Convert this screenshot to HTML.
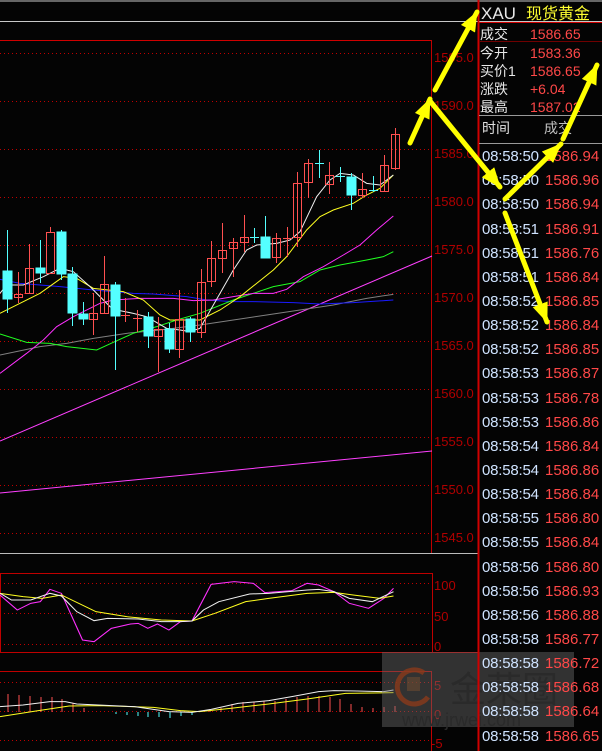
<!DOCTYPE html>
<html><head><meta charset="utf-8"><style>
html,body{margin:0;padding:0;background:#040404;}
body{width:602px;height:751px;overflow:hidden;position:relative;font-family:"Liberation Sans","Noto Sans CJK SC",sans-serif;}
svg{position:absolute;left:0;top:0;}
.ax{font-size:13px;fill:#b00000;}
.rt{font-size:15px;fill:#cfe3ff;letter-spacing:-0.2px;}
.rp{font-size:15px;fill:#ff4848;}
.lb{font-size:14px;fill:#e8e8e8;}
</style></head><body>
<svg width="602" height="751" viewBox="0 0 602 751">
<defs>
<marker id="ah" markerUnits="userSpaceOnUse" markerWidth="20" markerHeight="16" refX="19" refY="8" orient="auto"><path d="M0,0 L20,8 L0,16 Z" fill="#ffff00"/></marker>
</defs>
<rect width="602" height="751" fill="#040404"/>
<line x1="0" y1="1" x2="602" y2="1" stroke="#666" stroke-width="2"/>
<line x1="0" y1="21.5" x2="602" y2="21.5" stroke="#c8c8c8"/>
<line x1="0" y1="40.5" x2="432" y2="40.5" stroke="#d00000"/>
<g stroke="#c00000" stroke-dasharray="1,3">
<line x1="0" y1="53.5" x2="432" y2="53.5"/><line x1="0" y1="101.5" x2="432" y2="101.5"/>
<line x1="0" y1="149.5" x2="432" y2="149.5"/><line x1="0" y1="197.5" x2="432" y2="197.5"/>
<line x1="0" y1="245.5" x2="432" y2="245.5"/><line x1="0" y1="293.5" x2="432" y2="293.5"/>
<line x1="0" y1="341.5" x2="432" y2="341.5"/><line x1="0" y1="389.5" x2="432" y2="389.5"/>
<line x1="0" y1="437.5" x2="432" y2="437.5"/><line x1="0" y1="485.5" x2="432" y2="485.5"/>
<line x1="0" y1="533.5" x2="432" y2="533.5"/>
</g>
<line x1="431.5" y1="40" x2="431.5" y2="553" stroke="#c00000"/>
<g class="ax">
<text x="434" y="62">1595.0</text><text x="434" y="110">1590.0</text><text x="434" y="158">1585.0</text>
<text x="434" y="206">1580.0</text><text x="434" y="254">1575.0</text><text x="434" y="302">1570.0</text>
<text x="434" y="350">1565.0</text><text x="434" y="398">1560.0</text><text x="434" y="446">1555.0</text>
<text x="434" y="494">1550.0</text><text x="434" y="542">1545.0</text>
</g>
<line x1="0" y1="553.5" x2="478" y2="553.5" stroke="#bbb"/>
<line x1="0" y1="441" x2="432" y2="256" stroke="#ff40ff"/>
<line x1="0" y1="493" x2="432" y2="451" stroke="#ff40ff"/>
<g transform="translate(0,130) scale(0.33333)" fill="none" stroke-width="3">
<polyline stroke="#808080" points="0,675 120,650 200,640 280,625 380,610 480,600 600,585 700,570 800,555 900,540 1000,525 1100,505 1180,493"/>
<polyline stroke="#1a1aff" points="0,448 60,460 180,470 280,480 400,490 460,492 560,500 620,510 700,515 760,515 880,518 960,522 1060,518 1180,510"/>
<polyline stroke="#20ff20" points="0,612 80,637 150,640 200,650 290,660 340,637 400,610 470,590 530,570 600,550 700,510 760,490 820,470 900,455 960,420 1020,405 1100,390 1150,380 1180,365"/>
<polyline stroke="#ff30ff" points="0,730 80,670 130,630 170,590 220,560 300,520 340,510 420,505 520,505 580,512 640,510 700,500 760,490 820,490 860,478 910,440 970,410 1030,375 1080,345 1130,300 1180,258"/>
<polyline stroke="#ffff20" points="0,550 60,520 120,490 190,440 230,445 280,475 370,485 430,510 480,555 510,570 600,570 660,540 720,500 770,460 820,420 860,380 890,340 920,300 960,260 1000,240 1060,220 1100,195 1140,175 1180,135"/>
<polyline stroke="#f0f0f0" points="0,490 20,465 70,465 130,440 180,415 220,425 270,470 330,530 350,540 400,550 440,560 500,595 540,600 570,605 600,595 640,525 700,420 740,360 770,345 830,340 870,330 900,305 950,200 990,150 1020,130 1060,135 1100,160 1140,165 1180,135"/>
</g>
<g stroke-width="1">
<g stroke="#54ffff" fill="#54ffff">
<line x1="7.5" y1="230" x2="7.5" y2="313"/><rect x="3" y="271" width="9" height="28"/>
<line x1="40.5" y1="240" x2="40.5" y2="283"/><rect x="36" y="268" width="9" height="5"/>
<line x1="61.5" y1="230" x2="61.5" y2="280"/><rect x="57" y="232" width="9" height="42"/>
<line x1="72.5" y1="267" x2="72.5" y2="326"/><rect x="68" y="274" width="9" height="39"/>
<line x1="83.5" y1="302" x2="83.5" y2="325"/><rect x="79" y="314" width="9" height="5"/>
<line x1="115.5" y1="282" x2="115.5" y2="370"/><rect x="111" y="285" width="9" height="31"/>
<line x1="148.5" y1="312" x2="148.5" y2="348"/><rect x="144" y="317" width="9" height="19"/>
<line x1="169.5" y1="323" x2="169.5" y2="353"/><rect x="165" y="329" width="9" height="20"/>
<line x1="190.5" y1="317" x2="190.5" y2="342"/><rect x="186" y="319" width="9" height="13"/>
<line x1="254.5" y1="228" x2="254.5" y2="243"/><line x1="250" y1="237.5" x2="259" y2="237.5"/>
<line x1="265.5" y1="216" x2="265.5" y2="258"/><rect x="261" y="237" width="9" height="21"/>
<line x1="319.5" y1="150" x2="319.5" y2="178"/><line x1="315" y1="163.5" x2="324" y2="163.5"/>
<line x1="340.5" y1="167" x2="340.5" y2="182"/><line x1="336" y1="176.5" x2="345" y2="176.5"/>
<line x1="351.5" y1="173" x2="351.5" y2="210"/><rect x="347" y="177" width="9" height="18"/>
<line x1="373.5" y1="176" x2="373.5" y2="192"/><line x1="369" y1="190.5" x2="378" y2="190.5"/>
</g>
<g stroke="#ff5050" fill="none">
<line x1="18.5" y1="272" x2="18.5" y2="303"/><rect x="14.5" y="294.5" width="8" height="3"/>
<line x1="29.5" y1="244" x2="29.5" y2="293"/><rect x="25.5" y="268.5" width="8" height="25"/>
<line x1="50.5" y1="227" x2="50.5" y2="232"/><rect x="46.5" y="232.5" width="8" height="41"/>
<line x1="93.5" y1="293" x2="93.5" y2="335"/><rect x="89.5" y="313.5" width="8" height="6"/>
<line x1="104.5" y1="256" x2="104.5" y2="313"/><rect x="100.5" y="284.5" width="8" height="29"/>
<line x1="125.5" y1="298" x2="125.5" y2="322"/><line x1="121" y1="315.5" x2="130" y2="315.5"/>
<line x1="137.5" y1="310" x2="137.5" y2="332"/><line x1="133" y1="318.5" x2="142" y2="318.5"/>
<line x1="158.5" y1="317" x2="158.5" y2="372"/><rect x="154.5" y="329.5" width="8" height="7"/>
<line x1="179.5" y1="290" x2="179.5" y2="358"/><rect x="175.5" y="319.5" width="8" height="30"/>
<line x1="201.5" y1="269" x2="201.5" y2="338"/><rect x="197.5" y="282.5" width="8" height="50"/>
<line x1="211.5" y1="241" x2="211.5" y2="287"/><rect x="207.5" y="258.5" width="8" height="23"/>
<line x1="222.5" y1="223" x2="222.5" y2="273"/><rect x="218.5" y="250.5" width="8" height="8"/>
<line x1="233.5" y1="238" x2="233.5" y2="277"/><rect x="229.5" y="242.5" width="8" height="6"/>
<line x1="244.5" y1="215" x2="244.5" y2="252"/><rect x="240.5" y="237.5" width="8" height="5"/>
<line x1="276.5" y1="233" x2="276.5" y2="263"/><rect x="272.5" y="238.5" width="8" height="19"/>
<line x1="287.5" y1="227" x2="287.5" y2="257"/><line x1="283" y1="238.5" x2="292" y2="238.5"/>
<line x1="297.5" y1="172" x2="297.5" y2="247"/><rect x="293.5" y="183.5" width="8" height="54"/>
<line x1="308.5" y1="159" x2="308.5" y2="198"/><rect x="304.5" y="163.5" width="8" height="19"/>
<line x1="329.5" y1="162" x2="329.5" y2="194"/><rect x="325.5" y="175.5" width="8" height="9"/>
<line x1="362.5" y1="173" x2="362.5" y2="198"/><rect x="358.5" y="189.5" width="8" height="6"/>
<line x1="384.5" y1="155" x2="384.5" y2="192"/><rect x="380.5" y="165.5" width="8" height="26"/>
<line x1="395.5" y1="128" x2="395.5" y2="170"/><rect x="391.5" y="134.5" width="8" height="34"/>
</g>
</g>
<rect x="0.5" y="573.5" width="432" height="79" fill="none" stroke="#c00000"/>
<line x1="0" y1="652.5" x2="478" y2="652.5" stroke="#c00000"/>
<g stroke="#c00000" stroke-dasharray="1,3">
<line x1="0" y1="583.5" x2="432" y2="583.5"/><line x1="0" y1="613.5" x2="432" y2="613.5"/><line x1="0" y1="644.5" x2="432" y2="644.5"/>
</g>
<g class="ax"><text x="434" y="590">100</text><text x="434" y="621">50</text><text x="434" y="651">0</text></g>
<g transform="translate(0,550) scale(0.3839,0.33333)" fill="none" stroke-width="3">
<polyline stroke="#ff30ff" points="0,135 45,180 80,160 105,155 130,118 160,130 215,270 245,275 290,235 340,222 360,220 385,235 410,222 440,240 470,215 500,213 550,103 610,95 660,100 690,128 760,122 800,100 830,105 870,125 910,160 960,175 1000,145 1025,115"/>
<polyline stroke="#ffff20" points="0,130 60,140 110,145 160,135 250,185 330,200 420,210 500,213 560,190 640,155 700,145 800,130 870,127 920,135 990,145 1025,138"/>
<polyline stroke="#f0f0f0" points="0,130 30,150 80,150 130,130 160,138 200,185 245,212 280,205 360,207 420,215 470,215 500,213 530,180 570,155 650,132 700,130 800,120 830,118 870,125 910,145 970,155 1025,125"/>
</g>
<line x1="0" y1="671.5" x2="432" y2="671.5" stroke="#c00000"/>
<line x1="431.5" y1="671" x2="431.5" y2="751" stroke="#c00000"/>
<g stroke="#c00000" stroke-dasharray="1,3">
<line x1="0" y1="682.5" x2="432" y2="682.5"/><line x1="0" y1="711.5" x2="432" y2="711.5"/><line x1="0" y1="740.5" x2="432" y2="740.5"/>
</g>
<g class="ax"><text x="434" y="690">5</text><text x="434" y="719">0</text><text x="431" y="748">-5</text></g>
<g stroke="#ff5050">
<line x1="8" y1="694" x2="8" y2="712"/><line x1="19" y1="695" x2="19" y2="712"/><line x1="30" y1="696" x2="30" y2="712"/><line x1="41" y1="697" x2="41" y2="712"/><line x1="52" y1="697" x2="52" y2="712"/><line x1="62" y1="699" x2="62" y2="712"/><line x1="73" y1="703" x2="73" y2="712"/><line x1="84" y1="708" x2="84" y2="712"/>
<line x1="210" y1="709" x2="210" y2="712"/><line x1="221" y1="708" x2="221" y2="712"/><line x1="232" y1="704" x2="232" y2="712"/><line x1="243" y1="702" x2="243" y2="712"/><line x1="254" y1="702" x2="254" y2="712"/><line x1="264" y1="701" x2="264" y2="712"/><line x1="275" y1="701" x2="275" y2="712"/><line x1="286" y1="699" x2="286" y2="712"/><line x1="297" y1="697" x2="297" y2="712"/><line x1="308" y1="696" x2="308" y2="712"/><line x1="319" y1="696" x2="319" y2="712"/><line x1="330" y1="697" x2="330" y2="712"/><line x1="340" y1="699" x2="340" y2="712"/><line x1="351" y1="704" x2="351" y2="712"/><line x1="362" y1="707" x2="362" y2="712"/><line x1="373" y1="708" x2="373" y2="712"/><line x1="384" y1="707" x2="384" y2="712"/><line x1="395" y1="706" x2="395" y2="712"/>
</g>
<g stroke="#54ffff">
<line x1="116" y1="712" x2="116" y2="714"/><line x1="127" y1="712" x2="127" y2="715"/><line x1="138" y1="712" x2="138" y2="716"/><line x1="148" y1="712" x2="148" y2="717"/><line x1="159" y1="712" x2="159" y2="717"/><line x1="170" y1="712" x2="170" y2="718"/><line x1="181" y1="712" x2="181" y2="716"/><line x1="192" y1="712" x2="192" y2="715"/>
</g>
<g transform="translate(0,550) scale(0.3839,0.33333)" fill="none" stroke-width="3">
<polyline stroke="#ffff20" points="0,500 100,482 180,468 260,467 400,472 470,482 520,485 600,475 700,462 800,447 900,430 1025,428"/>
<polyline stroke="#f0f0f0" points="0,470 60,465 130,455 170,455 200,462 350,470 440,485 500,487 550,478 620,460 700,452 760,440 830,425 870,422 930,423 1000,425 1025,420"/>
</g>
<!-- watermark -->
<rect x="382" y="652" width="192" height="75" fill="#6a6a6a" fill-opacity="0.45"/>
<path d="M428,697 A17,17 0 1 1 424,673" fill="none" stroke="#8a3a1a" stroke-width="5" opacity="0.8"/>
<rect x="407" y="677" width="13" height="14" fill="#6a4a30" opacity="0.6"/>
<text x="450" y="702" font-size="36" fill="#2a2a2a" font-family="Noto Sans CJK SC, sans-serif">金荣圈</text>
<text x="402" y="726" font-size="18" fill="#2a2a2a">www.jrwei.com</text>
<!-- right panel -->
<line x1="478.5" y1="0" x2="478.5" y2="751" stroke="#d00000" stroke-width="2"/>
<line x1="479" y1="22.5" x2="602" y2="22.5" stroke="#d00000"/>
<line x1="479" y1="41.5" x2="602" y2="41.5" stroke="#700000"/>
<line x1="479" y1="115.5" x2="602" y2="115.5" stroke="#999"/>
<line x1="479" y1="143.5" x2="602" y2="143.5" stroke="#999"/>
<text x="481" y="19" font-size="17" fill="#e8e8e8">XAU</text>
<text x="526" y="19" font-size="16" fill="#ffff30" font-family="Noto Sans CJK SC, sans-serif">现货黄金</text>
<g class="lb"><text x="480" y="39">成交</text><text x="480" y="58">今开</text><text x="480" y="76">买价1</text><text x="480" y="94">涨跌</text><text x="480" y="112">最高</text></g>
<g class="rp" style="font-size:14px"><text x="530" y="39">1586.65</text><text x="530" y="58">1583.36</text><text x="530" y="76">1586.65</text><text x="530" y="94">+6.04</text><text x="530" y="112">1587.02</text></g>
<text x="482" y="133" font-size="14" fill="#e0e0e0">时间</text>
<text x="544" y="133" font-size="14" fill="#c0c0c0">成交</text>
<g class="rt">
<text x="482" y="161">08:58:50</text><text x="482" y="185">08:58:50</text><text x="482" y="209">08:58:50</text><text x="482" y="234">08:58:51</text><text x="482" y="258">08:58:51</text><text x="482" y="282">08:58:51</text><text x="482" y="306">08:58:52</text><text x="482" y="330">08:58:52</text><text x="482" y="354">08:58:52</text><text x="482" y="378">08:58:53</text><text x="482" y="403">08:58:53</text><text x="482" y="427">08:58:53</text><text x="482" y="451">08:58:54</text><text x="482" y="475">08:58:54</text><text x="482" y="499">08:58:54</text><text x="482" y="523">08:58:55</text><text x="482" y="547">08:58:55</text><text x="482" y="572">08:58:56</text><text x="482" y="596">08:58:56</text><text x="482" y="620">08:58:56</text><text x="482" y="644">08:58:58</text><text x="482" y="668">08:58:58</text><text x="482" y="692">08:58:58</text><text x="482" y="716">08:58:58</text><text x="482" y="741">08:58:58</text>
</g>
<g class="rp">
<text x="545" y="161">1586.94</text><text x="545" y="185">1586.96</text><text x="545" y="209">1586.94</text><text x="545" y="234">1586.91</text><text x="545" y="258">1586.76</text><text x="545" y="282">1586.84</text><text x="545" y="306">1586.85</text><text x="545" y="330">1586.84</text><text x="545" y="354">1586.85</text><text x="545" y="378">1586.87</text><text x="545" y="403">1586.78</text><text x="545" y="427">1586.86</text><text x="545" y="451">1586.84</text><text x="545" y="475">1586.86</text><text x="545" y="499">1586.84</text><text x="545" y="523">1586.80</text><text x="545" y="547">1586.84</text><text x="545" y="572">1586.80</text><text x="545" y="596">1586.93</text><text x="545" y="620">1586.88</text><text x="545" y="644">1586.77</text><text x="545" y="668">1586.72</text><text x="545" y="692">1586.68</text><text x="545" y="716">1586.64</text><text x="545" y="741">1586.65</text>
</g>
<g stroke="#ffff00" stroke-width="5" marker-end="url(#ah)" stroke-linecap="round">
<line x1="435" y1="90" x2="477" y2="12"/>
<line x1="410" y1="143" x2="430" y2="99"/>
<line x1="430" y1="101" x2="500" y2="187"/>
<line x1="505" y1="199" x2="561" y2="144"/>
<line x1="563" y1="139" x2="597" y2="65"/>
<line x1="505" y1="213" x2="547" y2="322"/>
</g>
</svg>
</body></html>
